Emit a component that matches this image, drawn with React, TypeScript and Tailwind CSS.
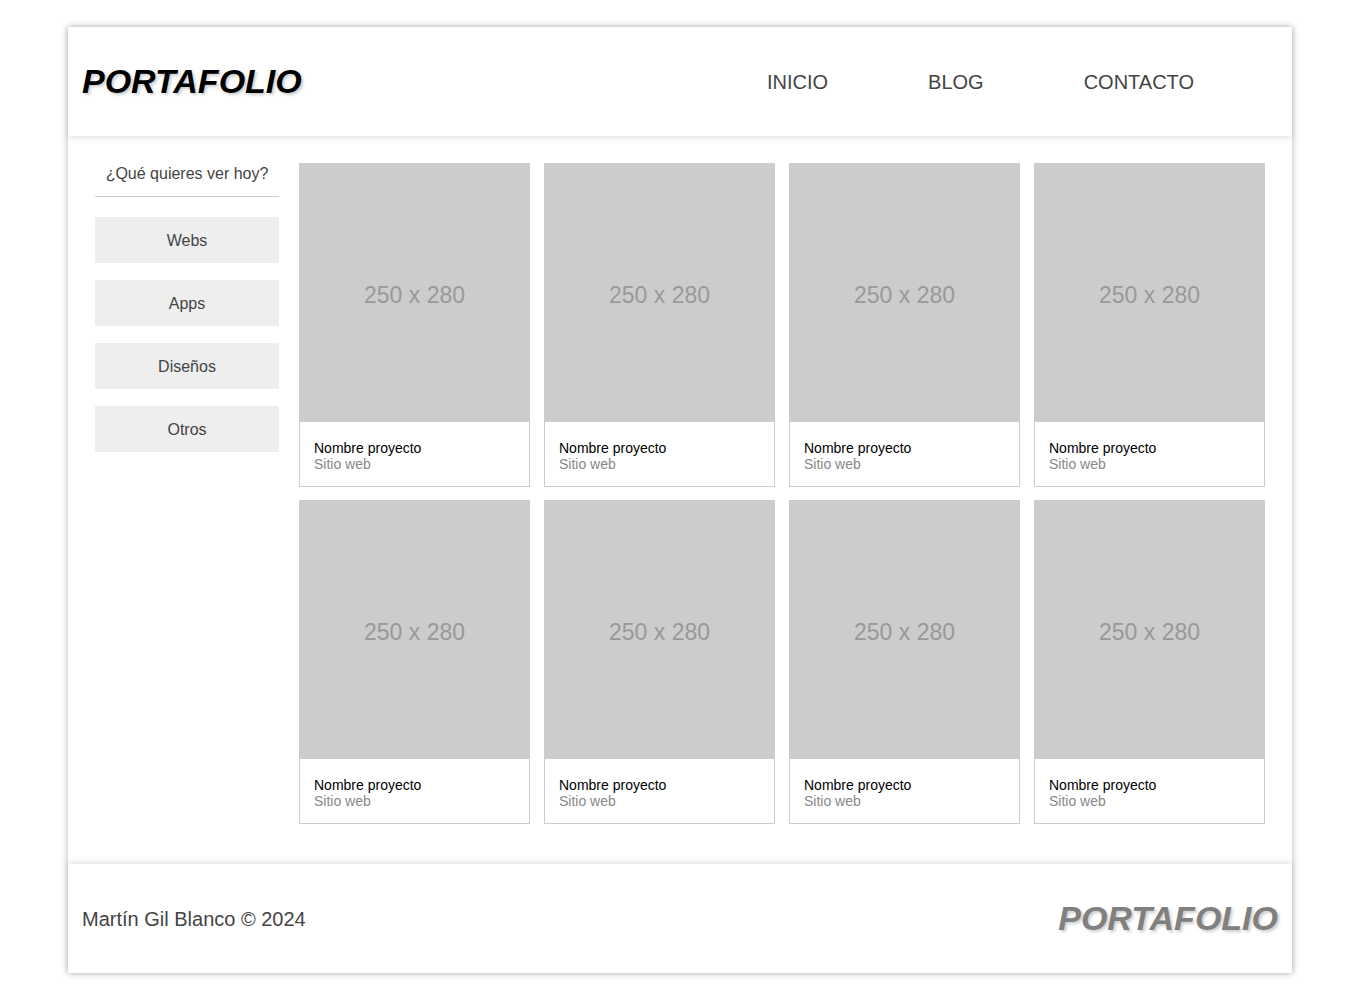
const filters = ["Webs", "Apps", "Diseños", "Otros"];

const projects = Array.from({ length: 8 }, (_, i) => ({
  id: i + 1,
  name: "Nombre proyecto",
  kind: "Sitio web",
}));

function ProjectCard({ name, kind }: { name: string; kind: string }) {
  return (
    <div className="flex flex-col border border-[#cccccc] bg-white">
      <div className="-mx-px -mt-px flex h-[259px] items-center justify-center bg-[#cccccc] pt-[6px] text-[23px] text-[#999999]">
        250 x 280
      </div>
      <div className="flex h-[64px] flex-col justify-center px-[14px] pt-[3px] text-sm leading-4">
        <span className="text-black">{name}</span>
        <span className="text-[#888888]">{kind}</span>
      </div>
    </div>
  );
}

export default function App() {
  return (
    <div className="min-h-screen bg-white pt-[27px] font-['Liberation_Sans',Arial,sans-serif]">
      <div className="mx-auto w-[1224px] bg-white shadow-[0_0_7px_rgba(0,0,0,0.3)]">
        <header className="relative z-10 flex h-[109px] items-center justify-between pl-[14px] pr-[98px] shadow-[0_2px_6px_rgba(0,0,0,0.12)]">
          <h1 className="text-[34px] font-bold italic text-black [text-shadow:2px_2px_3px_rgba(0,0,0,0.2)]">
            PORTAFOLIO
          </h1>
          <nav className="flex gap-[100px] pt-px text-xl text-[#444444]">
            <a>INICIO</a>
            <a>BLOG</a>
            <a>CONTACTO</a>
          </nav>
        </header>

        <main className="flex gap-5 px-[27px] pt-[27px] pb-[40px]">
          <aside className="w-[184px] shrink-0">
            <div className="border-b border-[#cccccc] pt-px pb-[12px] text-center text-base leading-5 text-[#444444]">
              ¿Qué quieres ver hoy?
            </div>
            <div className="mt-5 flex flex-col gap-[17px]">
              {filters.map((f) => (
                <button
                  key={f}
                  className="h-[46px] w-full bg-[#eeeeee] pt-px text-base text-[#444444]"
                >
                  {f}
                </button>
              ))}
            </div>
          </aside>

          <section className="grid flex-1 grid-cols-4 gap-x-[14px] gap-y-[13px]">
            {projects.map((p) => (
              <ProjectCard key={p.id} name={p.name} kind={p.kind} />
            ))}
          </section>
        </main>

        <footer className="relative z-10 flex h-[109px] items-center justify-between pl-[14px] pr-[14px] shadow-[0_-2px_6px_rgba(0,0,0,0.12)]">
          <span className="pt-px text-xl text-[#444444]">Martín Gil Blanco © 2024</span>
          <span className="text-[34px] font-bold italic text-[#808080] [text-shadow:2px_2px_3px_rgba(0,0,0,0.2)]">
            PORTAFOLIO
          </span>
        </footer>
      </div>
    </div>
  );
}
